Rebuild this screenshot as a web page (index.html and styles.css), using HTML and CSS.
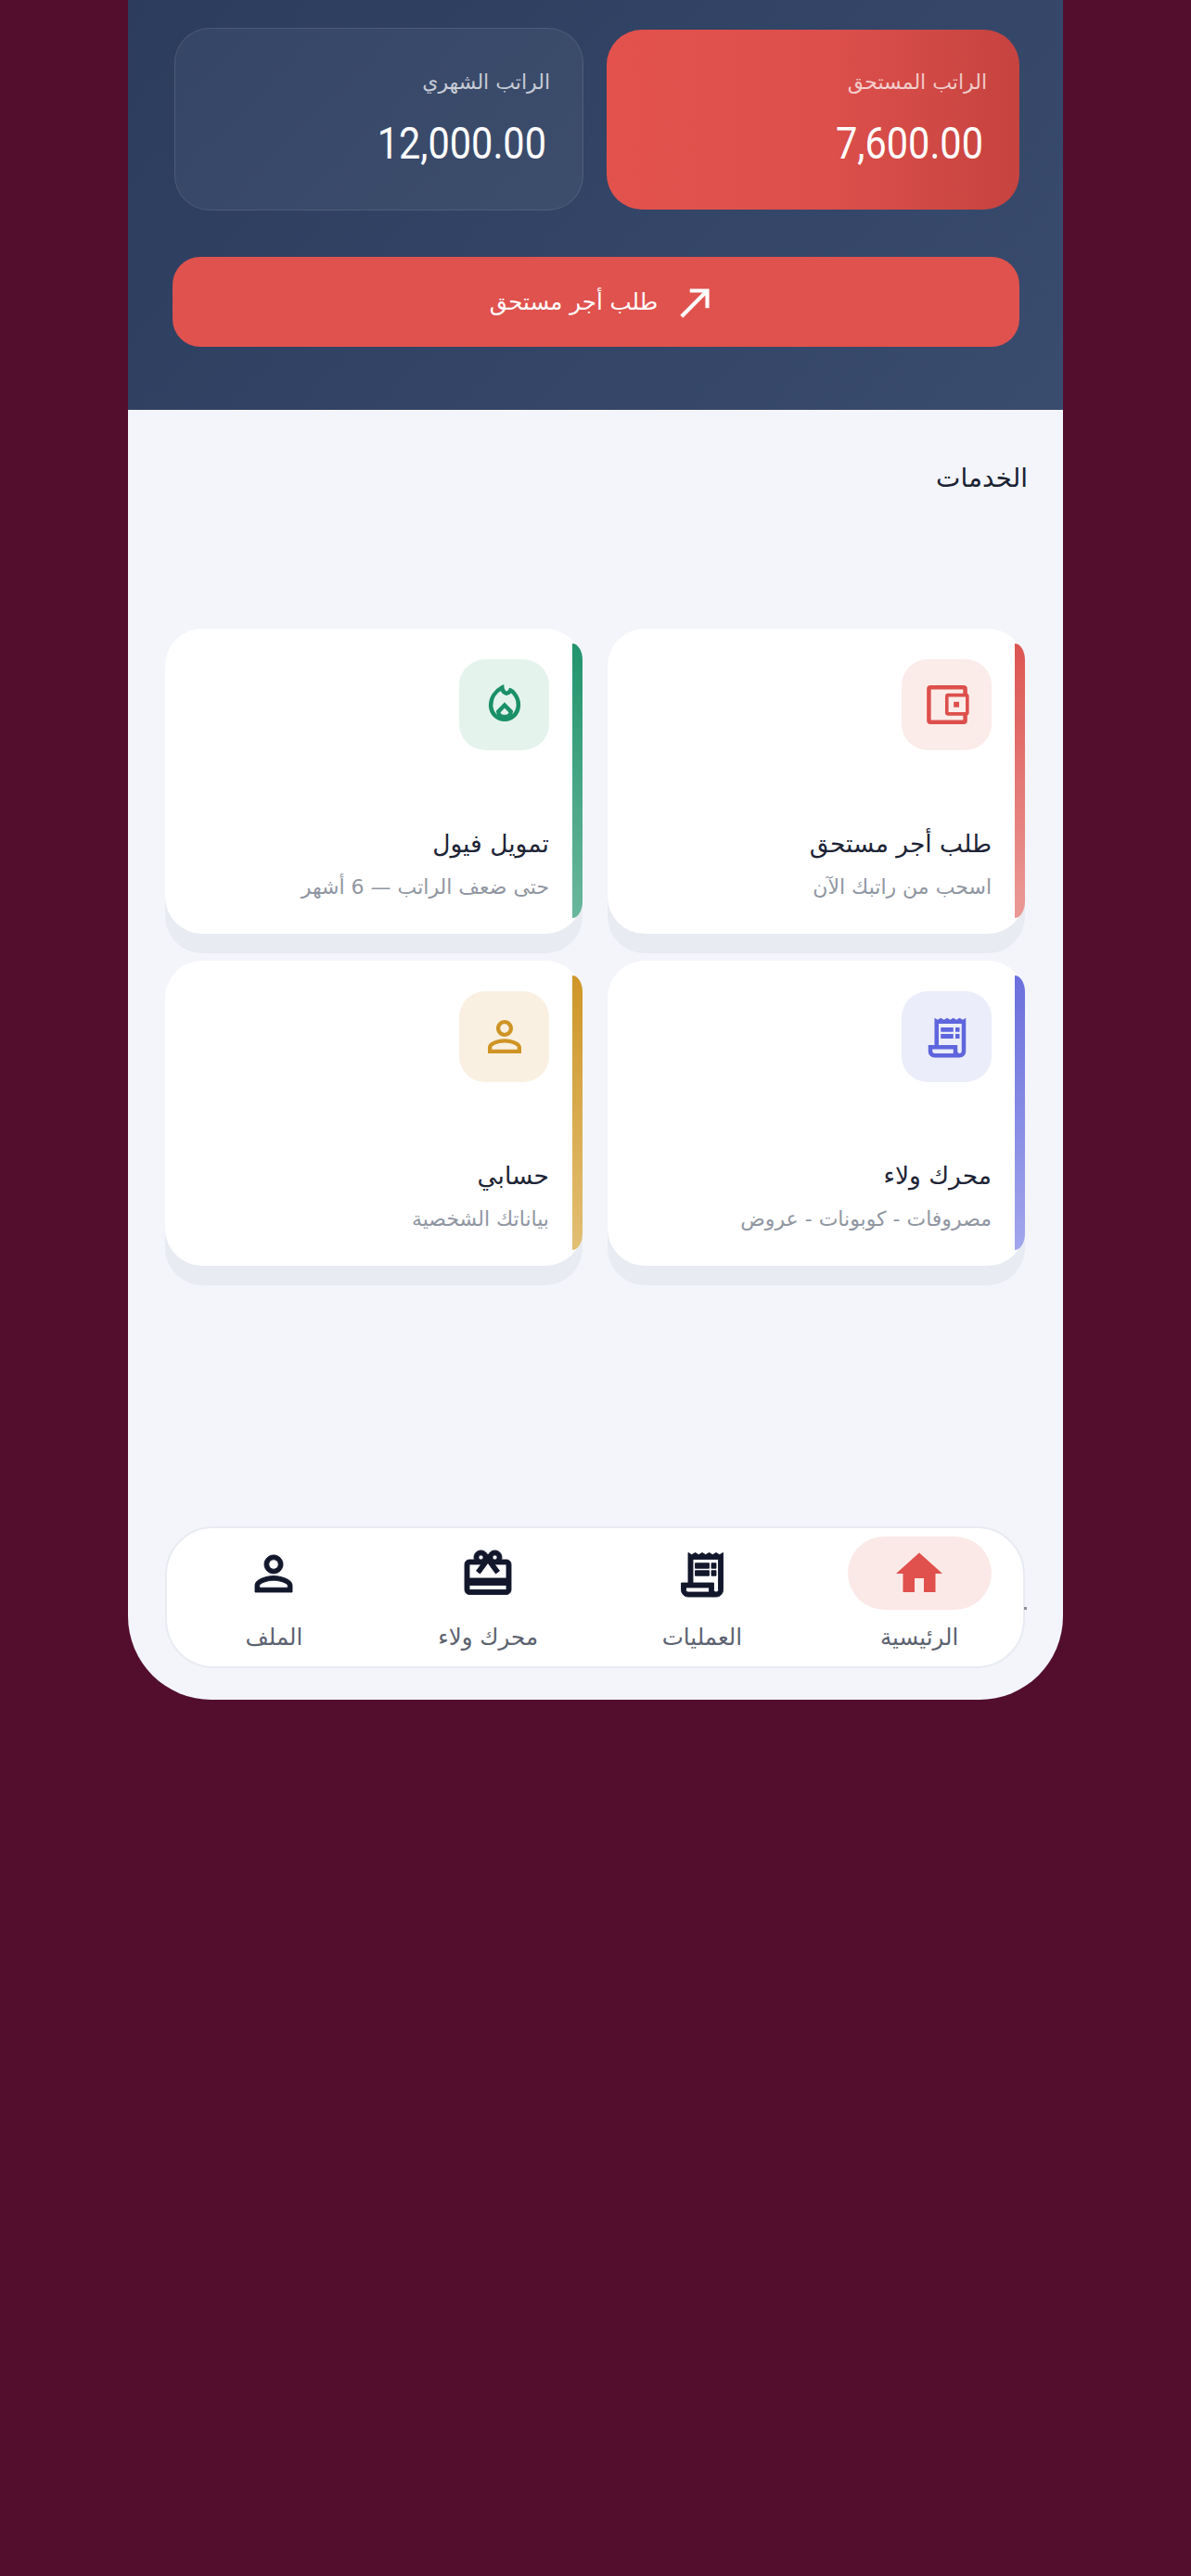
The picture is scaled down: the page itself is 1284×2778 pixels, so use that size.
FILE: index.html
```html
<!DOCTYPE html>
<html lang="ar" dir="rtl">
<head>
<meta charset="utf-8">
<title>الرئيسية</title>
<link rel="stylesheet" href="styles.css">
</head>
<body>
<main class="phone">
  <header class="hero">
    <div class="salaries">
      <section class="salary salary-earned">
        <p class="salary-label">الراتب المستحق</p>
        <p class="salary-value">7,600.00</p>
      </section>
      <section class="salary salary-monthly">
        <p class="salary-label">الراتب الشهري</p>
        <p class="salary-value">12,000.00</p>
      </section>
    </div>
    <button class="cta" type="button">
      <svg class="cta-icon" viewBox="0 0 24 24"><path d="M9 5v2h6.59L4 18.59 5.41 20 17 8.41V15h2V5z"/></svg>
      <span>طلب أجر مستحق</span>
    </button>
  </header>

  <div class="body">
    <h2 class="section-title">الخدمات</h2>
    <div class="services">
      <article class="card card-red">
        <div class="tile"><svg viewBox="0 0 24 24"><rect class="line" x="3.3" y="3.7" width="17.4" height="16.6" rx="0.8"/><rect class="pocket" x="11.9" y="7.4" width="9.8" height="9" rx="0.6"/><rect x="15.2" y="10.6" width="2.6" height="2.6"/></svg></div>
        <h3 class="card-title">طلب أجر مستحق</h3>
        <p class="card-sub">اسحب من راتبك الآن</p>
      </article>
      <article class="card card-green">
        <div class="tile"><svg viewBox="0 0 24 24"><path class="line" d="M10.8 3.8c.2 2.2 1.8 3.2 3 2.4.5-.3.8-.7 1-1.1.6.2 1.4.9 2.1 1.9 1 1.3 1.7 3 1.7 5 0 4.2-3 7-6.6 7s-6.6-2.8-6.6-6.8c0-3.6 2.2-6.7 5.4-8.4z"/><path class="line" d="M12 12.2l3 3.1c0 1.5-1.3 2.5-3 2.5s-3-1-3-2.5z"/></svg></div>
        <h3 class="card-title">تمويل فيول</h3>
        <p class="card-sub">حتى ضعف الراتب — 6 أشهر</p>
      </article>
      <article class="card card-indigo">
        <div class="tile"><svg viewBox="0 0 24 24"><path fill-rule="evenodd" d="M6 3l1.5.9L9 3l1.5.9L12 3l1.5.9L15 3l1.5.9L18 3l1.5.9L21 3v16c0 1.66-1.34 3-3 3H6c-1.66 0-3-1.34-3-3v-3h3zM8 5.8V16h9v3c0 .55.45 1 1 1s1-.45 1-1V5.8zM5 18v1c0 .55.45 1 1 1h9v-2z"/><path d="M9 7.5h6v2.2H9zm7 0h2v2.2h-2zM9 10.7h6v2.2H9zm7 0h2v2.2h-2z"/></svg></div>
        <h3 class="card-title">محرك ولاء</h3>
        <p class="card-sub">مصروفات - كوبونات - عروض</p>
      </article>
      <article class="card card-gold">
        <div class="tile"><svg viewBox="0 0 24 24"><path d="M12 5.9c1.16 0 2.1.94 2.1 2.1s-.94 2.1-2.1 2.1S9.9 9.16 9.9 8s.94-2.1 2.1-2.1m0 9c2.97 0 6.1 1.46 6.1 2.1v1.1H5.9V17c0-.64 3.13-2.1 6.1-2.1M12 4C9.79 4 8 5.79 8 8s1.79 4 4 4 4-1.79 4-4-1.79-4-4-4zm0 9c-2.67 0-8 1.34-8 4v3h16v-3c0-2.66-5.33-4-8-4z"/></svg></div>
        <h3 class="card-title">حسابي</h3>
        <p class="card-sub">بياناتك الشخصية</p>
      </article>
    </div>

    <nav class="tabbar">
      <a class="tab tab-active">
        <span class="tab-icon"><svg viewBox="0 0 24 24"><path d="M10 20v-6h4v6h5v-8h3L12 3 2 12h3v8z"/></svg></span>
        <span class="tab-label">الرئيسية</span>
      </a>
      <a class="tab">
        <span class="tab-icon"><svg viewBox="0 0 24 24"><path fill-rule="evenodd" d="M6 3l1.5.9L9 3l1.5.9L12 3l1.5.9L15 3l1.5.9L18 3l1.5.9L21 3v16c0 1.66-1.34 3-3 3H6c-1.66 0-3-1.34-3-3v-3h3zM8 5.8V16h9v3c0 .55.45 1 1 1s1-.45 1-1V5.8zM5 18v1c0 .55.45 1 1 1h9v-2z"/><path d="M9 7.5h6v2.2H9zm7 0h2v2.2h-2zM9 10.7h6v2.2H9zm7 0h2v2.2h-2z"/></svg></span>
        <span class="tab-label">العمليات</span>
      </a>
      <a class="tab">
        <span class="tab-icon"><svg viewBox="0 0 24 24"><path d="M20 6h-2.18c.11-.31.18-.65.18-1 0-1.66-1.34-3-3-3-1.05 0-1.96.54-2.5 1.35l-.5.67-.5-.68C10.96 2.54 10.05 2 9 2 7.34 2 6 3.34 6 5c0 .35.07.69.18 1H4c-1.11 0-1.99.89-1.99 2L2 19c0 1.11.89 2 2 2h16c1.11 0 2-.89 2-2V8c0-1.11-.89-2-2-2zm-5-2c.55 0 1 .45 1 1s-.45 1-1 1-1-.45-1-1 .45-1 1-1zM9 4c.55 0 1 .45 1 1s-.45 1-1 1-1-.45-1-1 .45-1 1-1zm11 15H4v-2h16v2zm0-5H4V8h5.08L7 10.83 8.62 12 11 8.76l1-1.36 1 1.36L15.38 12 17 10.83 14.92 8H20v6z"/></svg></span>
        <span class="tab-label">محرك ولاء</span>
      </a>
      <a class="tab">
        <span class="tab-icon"><svg viewBox="0 0 24 24"><path d="M12 5.9c1.16 0 2.1.94 2.1 2.1s-.94 2.1-2.1 2.1S9.9 9.16 9.9 8s.94-2.1 2.1-2.1m0 9c2.97 0 6.1 1.46 6.1 2.1v1.1H5.9V17c0-.64 3.13-2.1 6.1-2.1M12 4C9.79 4 8 5.79 8 8s1.79 4 4 4 4-1.79 4-4-1.79-4-4-4zm0 9c-2.67 0-8 1.34-8 4v3h16v-3c0-2.66-5.33-4-8-4z"/></svg></span>
        <span class="tab-label">الملف</span>
      </a>
    </nav>
  </div>
</main>
</body>
</html>
```

FILE: styles.css
```css
* { box-sizing: border-box; }
html, body { margin: 0; padding: 0; }
body {
  height: 2778px;
  background: #530e2e;
  font-family: "DejaVu Sans", "Noto Sans", sans-serif;
  overflow: hidden;
}
p, h2, h3 { margin: 0; font-weight: normal; }

.phone {
  width: 1008px;
  height: 1833px;
  margin: 0 auto;
  display: flex;
  flex-direction: column;
  background: #f3f5fa;
  border-radius: 0 0 90px 90px;
  overflow: hidden;
}

.hero {
  height: 442px;
  padding: 30px 47px 0 48px;
  background: linear-gradient(135deg, #2b3c5d 0%, #3a4c6e 100%);
}
.salaries {
  display: grid;
  grid-template-columns: 445px 441px;
  column-gap: 25px;
  align-items: center;
  height: 197px;
}
.salary {
  border-radius: 38px;
  padding: 0 35px 0 32px;
  display: flex;
  flex-direction: column;
}
.salary-earned {
  height: 194px;
  background: linear-gradient(270deg, #c6433f 0%, #dc4f4b 45%, #e3524d 100%);
  padding-top: 41px;
}
.salary-monthly {
  height: 197px;
  background: rgba(255, 255, 255, 0.05);
  border: 1.5px solid rgba(255, 255, 255, 0.1);
  padding-top: 42px;
}
.salary-label {
  font-size: 22px;
  line-height: 32px;
  color: rgba(255, 255, 255, 0.72);
}
.salary-value {
  margin: 25px 4px 0 0;
  font-family: "Roboto", "Open Sans", sans-serif;
  font-size: 41.5px;
  line-height: 50px;
  color: #fff;
  direction: ltr;
  text-align: right;
  transform: scaleY(1.14);
}

.cta {
  width: 100%;
  height: 97px;
  margin-top: 50px;
  padding: 0 0 0 18px;
  border: 0;
  border-radius: 30px;
  background: #e0524e;
  color: #fff;
  font-family: inherit;
  font-size: 24.5px;
  display: flex;
  align-items: center;
  justify-content: center;
  gap: 16px;
}
.cta-icon { width: 50px; height: 50px; fill: #fff; }

.body {
  flex: 1;
  padding: 0 41px 0 40px;
  display: flex;
  flex-direction: column;
}
.section-title {
  margin: 54px -3px 0 0;
  font-size: 28px;
  line-height: 40px;
  color: #1a2233;
}
.services {
  display: grid;
  grid-template-columns: 450px 450px;
  grid-auto-rows: 329px;
  column-gap: 27px;
  row-gap: 29px;
  margin-top: 142px;
}
.card {
  position: relative;
  background: #fff;
  border-radius: 40px;
  padding: 33px 36px 0;
  box-shadow: 0 21px 0 #e8ebf1;
  display: flex;
  flex-direction: column;
}
.card::after {
  content: "";
  position: absolute;
  top: 16px;
  right: 0;
  width: 11px;
  height: 296px;
  border-radius: 0 11px 11px 0 / 0 18px 18px 0;
  background: linear-gradient(180deg, var(--accent), var(--accent-soft));
}
.card-red { --accent: #dc5551; --accent-soft: #eb9a97; --tile: #fbece9; --icon: #dd4f4b; }
.card-green { --accent: #22946c; --accent-soft: #6ab79c; --tile: #e5f3ed; --icon: #1b9068; }
.card-indigo { --accent: #6a6fdc; --accent-soft: #a2a6ec; --tile: #ebedfa; --icon: #5f65dc; }
.card-gold { --accent: #cf9628; --accent-soft: #e2bf74; --tile: #f9f0e2; --icon: #cf9424; }

.tile {
  width: 97px;
  height: 98px;
  border-radius: 28px;
  background: var(--tile);
  display: flex;
  align-items: center;
  justify-content: center;
}
.tile svg { width: 54px; height: 54px; fill: var(--icon); }
.tile svg .line { fill: none; stroke: var(--icon); stroke-width: 2; }
.tile svg .pocket { fill: var(--tile); stroke: var(--icon); stroke-width: 1.6; }

.card-title {
  margin-top: 81px;
  font-size: 26.5px;
  line-height: 40px;
  color: #1d2435;
}
.card-sub {
  margin-top: 12px;
  font-size: 22px;
  line-height: 30px;
  color: #9096a2;
}

.tabbar {
  position: relative;
  margin-top: 281px;
  height: 153px;
  background: #fff;
  border: 2px solid #e8ebf1;
  border-radius: 52px;
  display: grid;
  grid-template-columns: repeat(4, 1fr);
}
.tabbar::after {
  content: "";
  position: absolute;
  top: 85px;
  right: -4px;
  width: 3px;
  height: 3px;
  background: #8b8f99;
}
.tab {
  display: flex;
  flex-direction: column;
  align-items: center;
  padding-top: 9px;
}
.tab-active { margin-right: -7px; }
.tab-icon {
  width: 155px;
  height: 79px;
  border-radius: 40px;
  display: flex;
  align-items: center;
  justify-content: center;
}
.tab-icon svg { width: 60px; height: 60px; fill: #12172b; stroke: #12172b; stroke-width: 0.35; }
.tab-active .tab-icon { background: #fbe9e7; }
.tab-active .tab-icon svg { fill: #e0504c; stroke: none; }
.tab-label {
  margin-top: 15px;
  font-size: 24.5px;
  line-height: 30px;
  color: #5c6270;
}
```
